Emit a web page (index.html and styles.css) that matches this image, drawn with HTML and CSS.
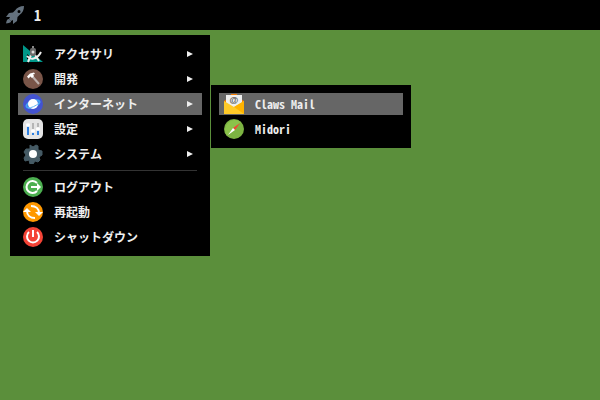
FILE: index.html
```html
<!DOCTYPE html>
<html lang="ja">
<head>
  <meta charset="UTF-8">
  <meta name="viewport" content="width=device-width, initial-scale=1.0">
  <title>デスクトップ</title>
  <link rel="stylesheet" href="styles.css">
</head>
<body>
  <header class="panel">
    <button class="launcher" aria-label="メニュー">
      <svg width="20" height="20" viewBox="0 0 20 20">
        <path fill="#64717d" fill-rule="evenodd" d="M19 1c-4 0-7 1.500-9 4.500L8 7.500 4 8 1 12l4 0-1 2 2 2 2-1v4l4-3 .5-4 2-2C17.500 8 19 5 19 1zM14 5a1.500 1.500 0 1 1 0 3 1.500 1.500 0 0 1 0-3z"/>
        <path fill="#64717d" d="M4 14c-2 0-2.500 2-3 4.500C3.500 18 6 18 6 16z"/>
      </svg>
    </button>
    <button class="workspace">1</button>
  </header>

  <nav class="menu">
    <div class="entry">
      <button class="item">
        <svg class="icon" viewBox="0 0 20 20">
          <path fill="#009688" fill-rule="evenodd" d="M0 1l20 17H0zM4 10v5h6z"/>
          <path fill="none" stroke="#eee" stroke-width="2" d="M4 12c3 4 10 4 14-4"/>
          <path fill="none" stroke="#eee" stroke-width="2" d="M8 11L5 18M12 11l4 6"/>
          <rect x="9" y="2" width="2" height="3" fill="#888"/>
          <rect x="7" y="4" width="6" height="8" rx="2" fill="#6b6b6b"/>
          <circle cx="10" cy="8" r="1.500" fill="#ddd"/>
        </svg>
        <span class="label">アクセサリ</span>
        <span class="arrow"></span>
      </button>
    </div>
    <div class="entry">
      <button class="item">
        <svg class="icon" viewBox="0 0 20 20">
          <circle cx="10" cy="10" r="10" fill="#795548"/>
          <path stroke="#bcb0ac" stroke-width="2" d="M9 7l7 8"/>
          <path fill="#fff" d="M4 7.500L7 4.500 11 3.500 12 5 10 5.500 11 7 9 9 7.500 7.500 5.500 9.500z"/>
        </svg>
        <span class="label">開発</span>
        <span class="arrow"></span>
      </button>
    </div>
    <div class="entry">
      <button class="item active" aria-expanded="true">
        <svg class="icon" viewBox="0 0 20 20">
          <circle cx="10" cy="10" r="10" fill="#4353d0"/>
          <ellipse cx="10" cy="10" rx="7" ry="3" fill="none" stroke="#42a5f5" stroke-width="2" transform="rotate(-22 10 10)"/>
          <circle cx="10" cy="10" r="5" fill="#fff"/>
          <path fill="none" stroke="#64b5f6" stroke-width="1" d="M5 14c3 0 8-2 11-5"/>
        </svg>
        <span class="label">インターネット</span>
        <span class="arrow"></span>
      </button>
      <div class="menu submenu">
        <button class="item active">
          <svg class="icon" viewBox="0 0 20 20">
            <path fill="#f57c00" d="M0 7L10 0l10 7v5H0zM7 0h6v2H7z"/>
            <path fill="#eee" d="M2 1h16v13H2z"/>
            <path fill="#ffca28" d="M0 7l10 6 10-6v13H0z"/>
            <path fill="#ffb300" d="M10 13L20 20V7z"/>
            <text class="at" x="10" y="9" text-anchor="middle">@</text>
          </svg>
          <span class="label">Claws Mail</span>
        </button>
        <button class="item">
          <svg class="icon" viewBox="0 0 20 20">
            <circle cx="10" cy="10" r="10" fill="#7cb342"/>
            <path fill="#8bc34a" d="M3 17A10 10 0 0 1 17 3z"/>
            <path fill="#f44336" d="M16 4l-5 7-2-2z"/>
            <path fill="#fff" d="M4 16l5-7 2 2z"/>
          </svg>
          <span class="label">Midori</span>
        </button>
      </div>
    </div>
    <div class="entry">
      <button class="item">
        <svg class="icon" viewBox="0 0 20 20">
          <rect width="20" height="20" rx="5" fill="#e4e4e4"/>
          <path stroke="#b5b5b5" stroke-width="2" d="M5 4v12M10 4v12M15 4v12"/>
          <path stroke="#2f80e0" stroke-width="2" d="M5 6v10M10 12v4M15 10v6"/>
          <g fill="#fff">
            <circle cx="5" cy="6" r="2"/>
            <circle cx="10" cy="12" r="2"/>
            <circle cx="15" cy="10" r="2"/>
          </g>
        </svg>
        <span class="label">設定</span>
        <span class="arrow"></span>
      </button>
    </div>
    <div class="entry">
      <button class="item">
        <svg class="icon" viewBox="0 0 20 20">
          <path fill="#455a64" stroke="#455a64" stroke-linejoin="round" d="M7 1l3 2 3-2 2 1v4l4 1v4l-3 2 1 3-2 2-3-1-2 3H7l-1-4-4 1-1-3 2-3-2-3 2-3 4 0z"/>
          <circle cx="10" cy="10" r="4" fill="#fff"/>
        </svg>
        <span class="label">システム</span>
        <span class="arrow"></span>
      </button>
    </div>

    <hr class="separator">

    <button class="item">
      <svg class="icon" viewBox="0 0 20 20">
        <circle cx="10" cy="10" r="10" fill="#4caf50"/>
        <path fill="none" stroke="#fff" stroke-width="2" d="M14 6a6 6 0 1 0 0 8M8 10h7"/>
        <path fill="#fff" d="M14 6l4 4-4 4z"/>
      </svg>
      <span class="label">ログアウト</span>
    </button>
    <button class="item">
      <svg class="icon" viewBox="0 0 20 20">
        <circle cx="10" cy="10" r="10" fill="#ff9800"/>
        <path fill="none" stroke="#fff" stroke-width="2" d="M4 9c0 4 3 7 8 7M8 4c5 0 8 3 8 7"/>
        <path fill="#fff" d="M0 10l4-4 4 4zM12 10h8l-4 4z"/>
      </svg>
      <span class="label">再起動</span>
    </button>
    <button class="item">
      <svg class="icon" viewBox="0 0 20 20">
        <circle cx="10" cy="10" r="10" fill="#f44336"/>
        <path fill="none" stroke="#fff" stroke-width="2" d="M6 5a6 6 0 1 0 8 0M10 3v7"/>
      </svg>
      <span class="label">シャットダウン</span>
    </button>
  </nav>
</body>
</html>
```
FILE: styles.css
```css
body {
  margin: 0;
  background-color: #5b8f3b;
  font-family: "Noto Sans Mono CJK JP", "Noto Sans CJK JP", sans-serif;
  font-size: 12px;
  font-weight: bold;
  color: #eee;
}

button {
  border: none;
  background: none;
  color: inherit;
  font: inherit;
  cursor: pointer;
}

.panel {
  display: flex;
  align-items: center;
  gap: 9px;
  height: 30px;
  padding: 0 5px;
  background-color: #000;
}

.launcher {
  display: flex;
  padding: 0;
}

.workspace {
  padding: 0;
  font-size: 14px;
}

.menu {
  display: flex;
  flex-direction: column;
  gap: 3px;
  box-sizing: border-box;
  width: 200px;
  margin: 5px 10px;
  padding: 8px;
  background-color: #000;
}

.entry {
  position: relative;
}

.item {
  display: flex;
  align-items: center;
  gap: 11px;
  width: 100%;
  height: 22px;
  padding: 0 9px 0 5px;
  text-align: left;
}

.item:hover,
.active {
  background-color: #666;
}

.icon {
  flex: none;
  width: 20px;
  height: 20px;
}

.label {
  flex: 1;
  line-height: 20px;
  white-space: nowrap;
}

.arrow {
  border: 3px solid transparent;
  border-left: 6px solid #eee;
  border-right: none;
}

.separator {
  align-self: stretch;
  height: 1px;
  margin: 2px 5px;
  border: none;
  background-color: #333;
}

/* opens beside its parent entry */
.submenu {
  position: absolute;
  top: -8px;
  left: 193px;
  margin: 0;
}

.at {
  fill: #555;
  font-family: "Liberation Sans", sans-serif;
  font-size: 9px;
}
```
